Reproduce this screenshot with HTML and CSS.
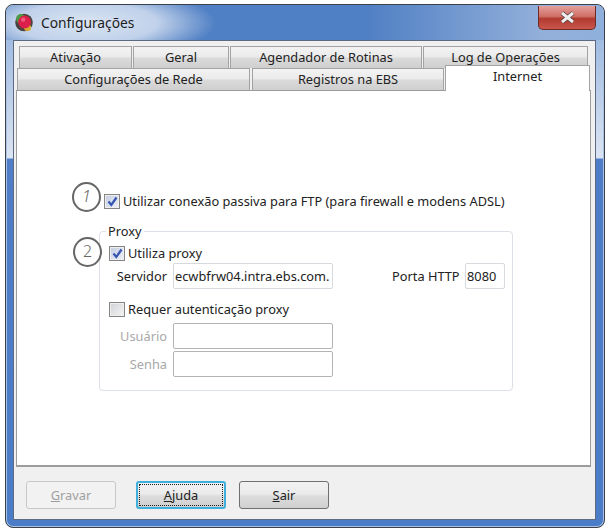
FILE: index.html
```html
<html>
	<head>
		<meta charset="utf-8">
		<title>Configurações</title>
		<link rel="stylesheet" href="styles.css">
	</head>
	<body>
		<div id="window">
			<div id="titleBar">
				<svg class="appIcon" width="18" height="19" viewBox="0 0 18 19">
					<circle cx="9" cy="9.5" r="8.8" fill="#4a4440"/>
					<circle cx="5.8" cy="5.8" r="4.8" fill="#4f9a45"/>
					<circle cx="12.5" cy="14.5" r="3.6" fill="#d9a72e"/>
					<circle cx="9.6" cy="9" r="6.4" fill="#dc1f4a"/>
					<circle cx="8.2" cy="6.6" r="2.2" fill="#ee5c7c"/>
				</svg>
				<span id="titleText">Configurações</span>
				<div id="closeBtn">
					<svg width="17" height="13" viewBox="0 0 17 13">
						<path d="M3 2 L14 11 M14 2 L3 11" stroke="#4a3a3a" stroke-width="4.4" fill="none"/>
						<path d="M3 2 L14 11 M14 2 L3 11" stroke="#f0eeee" stroke-width="3" fill="none"/>
					</svg>
				</div>
			</div>
			<div id="client">
				<div class="tabRow" id="tabsBack">
					<div class="tab w113">Ativação</div>
					<div class="tab w96">Geral</div>
					<div class="tab w192">Agendador de Rotinas</div>
					<div class="tab w165">Log de Operações</div>
				</div>
				<div class="tabRow" id="tabsFront">
					<div class="tab w233">Configurações de Rede</div>
					<div class="tab w192">Registros na EBS</div>
					<div class="tab active">Internet</div>
				</div>
				<div id="panel">
					<div class="mark markOne">1</div>
					<div class="mark markTwo">2</div>
					<label class="check" id="passiveRow">
						<span class="box on"><svg width="11" height="11" viewBox="0 0 11 11"><path d="M1.5 5.5 L4.3 9 L9.5 1.5" stroke="#3555b0" stroke-width="2.2" fill="none"/></svg></span>
						Utilizar conexão passiva para FTP (para firewall e modens ADSL)
					</label>
					<fieldset id="proxyGroup">
						<legend>Proxy</legend>
						<label class="check" id="proxyRow">
							<span class="box on"><svg width="11" height="11" viewBox="0 0 11 11"><path d="M1.5 5.5 L4.3 9 L9.5 1.5" stroke="#3555b0" stroke-width="2.2" fill="none"/></svg></span>
							Utiliza proxy
						</label>
						<div class="fieldRow" id="serverRow">
							<span class="fieldLabel">Servidor</span>
							<input class="field" value="ecwbfrw04.intra.ebs.com.">
							<span id="portLabel">Porta HTTP</span>
							<input class="field" id="portField" value="8080">
						</div>
						<label class="check" id="authRow">
							<span class="box"></span>
							Requer autenticação proxy
						</label>
						<div class="fieldRow" id="userRow">
							<span class="fieldLabel off">Usuário</span>
							<input class="field dim" disabled>
						</div>
						<div class="fieldRow" id="passRow">
							<span class="fieldLabel off">Senha</span>
							<input class="field dim" disabled>
						</div>
					</fieldset>
				</div>
				<div id="buttons">
					<button class="myButton" id="btnSave" disabled><u>G</u>ravar</button>
					<button class="myButton" id="btnHelp"><span id="focusBox"><u>A</u>juda</span></button>
					<button class="myButton" id="btnExit"><u>S</u>air</button>
				</div>
			</div>
		</div>
	</body>
</html>
```

FILE: styles.css
```css
body{
	margin:0;
	background-color:white;
	font-family:"Noto Sans", sans-serif;
	font-size:12.8px;
	color:#222222;
}
#window{
	width:600px;
	height:524px;
	margin:4px 0 0 5px;
	box-sizing:border-box;
	border:1px solid #3c4048;
	border-radius:8px;
	background:linear-gradient(to bottom, #8fb0dc 0, #dbe4f2 153px, #4f7dc8 154px, #4a7cc8 100%);
	padding:0 6px 7px 7px;
	box-shadow:inset 0 0 0 1px #a9c2e6;
}
#titleBar{
	height:35px;
	display:flex;
	align-items:center;
	margin:0 -6px 0 -7px;
	padding:0 0 0 9px;
	border-radius:8px 8px 0 0;
	background:radial-gradient(ellipse 130px 36px at 80px 18px, #dbe5f3 0%, #c0d1ea 55%, rgba(120,160,215,0) 100%), linear-gradient(to right, #4f7fc4 60%, #93b0da 90%, #8fb0dc 100%);
}
.appIcon{
	flex:none;
}
#titleText{
	margin-left:8px;
	font-size:13.8px;
	color:#1d1d1d;
}
#closeBtn{
	width:58px;
	height:24px;
	margin:-10px 8px 0 auto;
	box-sizing:border-box;
	border:1px solid #6d2a26;
	border-top:none;
	border-radius:0 0 5px 5px;
	background:linear-gradient(to bottom, #e3a09a 0%, #cf6f66 45%, #b23a30 55%, #c9574c 100%);
	display:flex;
	align-items:center;
	justify-content:center;
}
#client{
	height:480px;
	width:583px;
	box-sizing:border-box;
	border:1px solid #5c6b82;
	background-color:#f0f0f0;
	padding:5px 4px 0 2px;
}
.tabRow{
	display:flex;
}
#tabsBack{
	height:22px;
	padding-left:3px;
	gap:1px;
}
#tabsFront{
	height:22px;
	padding-left:1px;
	gap:2px;
}
.tab{
	box-sizing:border-box;
	border:1px solid #a3a3a3;
	border-bottom:none;
	background:linear-gradient(to bottom, #f3f3f3 0%, #ebebeb 45%, #dadada 55%, #cfcfcf 100%);
	text-align:center;
	line-height:21px;
	flex:none;
}
.w113{width:113px;}
.w96{width:96px;}
.w165{width:165px;}
.w233{width:233px;}
.w192{width:192px;}
.tab.active{
	width:145px;
	height:26px;
	margin:-3px 0 0 -1px;
	position:relative;
	z-index:1;
	background:white;
	line-height:20px;
}
#panel{
	position:relative;
	height:377px;
	box-sizing:border-box;
	border:1px solid #9c9c9c;
	border-width:1px 1px 2px 1px;
	background:white;
	padding:102px 0 0 87px;
}
.mark{
	position:absolute;
	width:29px;
	height:30px;
	box-sizing:border-box;
	border:2.5px solid #666666;
	border-radius:50%;
	text-align:center;
	line-height:25px;
	font-size:16px;
	font-weight:300;
	color:#666666;
	background:white;
}
.markOne{
	left:55px;
	top:91px;
	font-style:italic;
}
.markTwo{
	left:56px;
	top:146px;
}
.check{
	display:flex;
	align-items:center;
	height:16px;
}
.box{
	width:16px;
	height:15px;
	box-sizing:border-box;
	flex:none;
	margin-right:3px;
	border:1px solid #858585;
	background:linear-gradient(135deg, #cfd2d6, #f4f4f4);
	box-shadow:inset 0 0 0 1px #eeeeee;
	display:flex;
	align-items:center;
	justify-content:center;
}
.box.on{
	background:linear-gradient(135deg, #c3cce0, #eef1f8);
}
#proxyGroup{
	width:414px;
	height:168px;
	box-sizing:border-box;
	margin:14px 0 0 -5px;
	padding:0 0 0 9px;
	border:1px solid #dce1e8;
	border-radius:4px;
	min-width:0;
}
#proxyGroup legend{
	padding:0 2px;
	margin-left:-3px;
	line-height:16px;
}
.fieldRow{
	display:flex;
	align-items:center;
}
.fieldLabel{
	width:73px;
	margin-left:-9px;
	padding-right:6px;
	box-sizing:border-box;
	text-align:right;
}
.off{
	color:#a8a8a8;
}
.field{
	width:160px;
	height:26px;
	box-sizing:border-box;
	border:1px solid #d6d9dd;
	border-radius:2px;
	padding:0 0 0 1px;
	margin:0;
	font-family:"Noto Sans", sans-serif;
	font-size:12.8px;
	color:#222222;
	background:white;
}
.dim{
	border-color:#b4b4b4;
}
#portLabel{
	margin-left:59px;
	width:73px;
}
#portField{
	width:40px;
}
#proxyRow{
	margin-top:6px;
}
#serverRow{
	margin-top:2px;
}
#authRow{
	margin-top:12px;
}
#userRow{
	margin-top:6px;
}
#passRow{
	margin-top:2px;
}
#buttons{
	display:flex;
	margin-top:14px;
	padding-left:10px;
}
.myButton{
	width:90px;
	height:28px;
	box-sizing:border-box;
	border:1px solid #707070;
	border-radius:3px;
	padding:0;
	font-family:"Noto Sans", sans-serif;
	font-size:12.8px;
	color:#222222;
	background:linear-gradient(to bottom, #f2f2f2 0%, #ebebeb 45%, #dddddd 55%, #cfcfcf 100%);
}
#btnSave{
	color:#a0a0a0;
	border-color:#c8c8c8;
	background:#f2f2f2;
}
#btnHelp{
	margin-left:20px;
	border:2px solid #3fb0dc;
	padding:1px;
}
#focusBox{
	display:block;
	height:100%;
	box-sizing:border-box;
	border:1px dotted #222222;
	line-height:20px;
}
#btnExit{
	margin-left:13px;
}
```
